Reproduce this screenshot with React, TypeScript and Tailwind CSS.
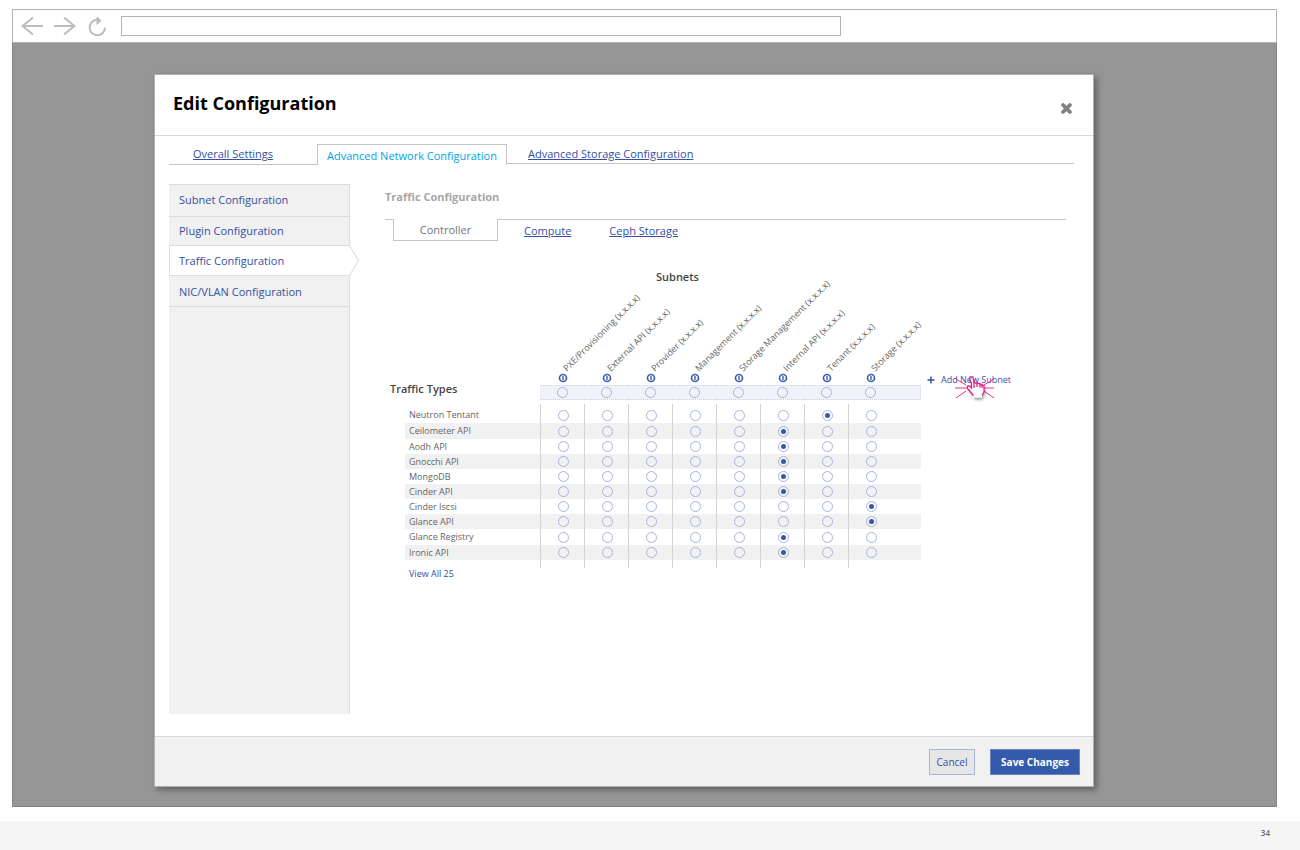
import React, { useState } from "react";

const subnets = [
  "PXE/Provisioning (x.x.x.x)",
  "External API (x.x.x.x)",
  "Provider (x.x.x.x)",
  "Management (x.x.x.x)",
  "Storage Management (x.x.x.x)",
  "Internal API (x.x.x.x)",
  "Tenant (x.x.x.x)",
  "Storage (x.x.x.x)",
];

type Traffic = { name: string; subnet: number; height: string };

const traffic: Traffic[] = [
  { name: "Neutron Tentant", subnet: 6, height: "h-[19px] *:pt-[3px]" },
  { name: "Ceilometer API", subnet: 5, height: "h-[16px]" },
  { name: "Aodh API", subnet: 5, height: "h-[15px]" },
  { name: "Gnocchi API", subnet: 5, height: "h-[15px]" },
  { name: "MongoDB", subnet: 5, height: "h-[15px]" },
  { name: "Cinder API", subnet: 5, height: "h-[15px]" },
  { name: "Cinder Iscsi", subnet: 7, height: "h-[15px]" },
  { name: "Glance API", subnet: 7, height: "h-[15px]" },
  { name: "Glance Registry", subnet: 5, height: "h-[16px]" },
  { name: "Ironic API", subnet: 5, height: "h-[15px]" },
];

function Radio(props: React.InputHTMLAttributes<HTMLInputElement>) {
  return (
    <input
      type="radio"
      {...props}
      className="ml-[17px] flex size-[11px] appearance-none items-center justify-center rounded-full border border-[#aab2dc] before:hidden before:size-[5px] before:rounded-full before:bg-[#345bab] checked:before:block"
    />
  );
}

function BrowserBar() {
  return (
    <div className="flex h-[34px] items-center border border-[#b3b3b3] bg-white pl-2">
      <button type="button" aria-label="Back">
        <svg width="22" height="20" viewBox="0 0 22 20" fill="none" stroke="#bcbcbc" strokeWidth="2">
          <path d="M22 10H1.5M12 1.5L1.5 10L12 18.5" />
        </svg>
      </button>
      <button type="button" aria-label="Forward" className="ml-[11px]">
        <svg width="22" height="20" viewBox="0 0 22 20" fill="none" stroke="#bcbcbc" strokeWidth="2">
          <path d="M0 10H20.5M10 1.5L20.5 10L10 18.5" />
        </svg>
      </button>
      <button type="button" aria-label="Reload" className="ml-[11px]">
        <svg width="20" height="20" viewBox="0 0 20 20" fill="none">
          <path d="M10.5 3.8A7.7 7.7 0 1 0 18 11.5" stroke="#bcbcbc" strokeWidth="2" />
          <path d="M10 1L14 4.5L10 8.5Z" fill="#bcbcbc" stroke="#bcbcbc" />
        </svg>
      </button>
      <input
        type="text"
        aria-label="Address"
        className="ml-[14px] h-5 w-[720px] border border-[#b3b3b3] bg-white px-2 text-[11px] outline-none"
      />
    </div>
  );
}

function Sidebar() {
  return (
    <nav
      aria-label="Network sections"
      className="min-h-[530px] w-[181px] shrink-0 border-t border-r border-[#dcdcdc] bg-[#f1f1f1] text-[11px] text-[#3450a4]"
    >
      <a href="#subnet" className="flex h-8 items-center border-b border-[#dcdcdc] pl-[10px]">
        Subnet Configuration
      </a>
      <a href="#plugin" className="flex h-[29px] items-center border-b border-[#dcdcdc] pl-[10px]">
        Plugin Configuration
      </a>
      <a
        href="#traffic"
        aria-current="page"
        className="relative flex h-[30px] items-center border-b border-l border-[#dcdcdc] bg-white pt-[2px] pl-[9px]"
      >
        Traffic Configuration
        <svg className="absolute -top-px left-full" width="11" height="31" viewBox="0 0 11 31" fill="none">
          <path d="M0 0.5H1L10 15.5L1 30.5H0Z" fill="#fff" />
          <path d="M0.5 0.5L9.5 15.5L0.5 30.5" stroke="#d6d6d6" />
        </svg>
      </a>
      <a href="#nic" className="flex h-[31px] items-center border-b border-[#dcdcdc] pt-[2px] pl-[10px]">
        NIC/VLAN Configuration
      </a>
    </nav>
  );
}

function ClickPointer() {
  return (
    <svg
      className="pointer-events-none absolute top-0 left-7"
      width="42"
      height="28"
      viewBox="0 0 42 28"
      fill="none"
      aria-hidden="true"
    >
      <defs>
        <filter id="hand-shadow" x="-30%" y="-30%" width="170%" height="170%">
          <feDropShadow dx="1" dy="2" stdDeviation="1.5" floodColor="#000" floodOpacity="0.45" />
        </filter>
      </defs>
      <path
        d="M1 5L11 11M0 14H12M1 24L11 17M39 5L29 11M39 14H29M39 24L29 17"
        stroke="#e8318f"
      />
      <path
        filter="url(#hand-shadow)"
        d="M15 3H18.5V9H21.5V9.5H24.5V10.5H27V11.5H29V18L27 21V23.5H18.5V21L15.5 18L12.5 14.5V12H14.5L16.5 14V8Z"
        fill="#fff"
      />
      <path
        d="M18.5 21.5L15.5 18L12.5 14.5V12H14.5L16.5 14V9L15 7V3H18L19 9V14M19 9H22V13M22.5 9.5H25V13.5M25 10.5H27V14M27.5 11.5H29V18L27 21"
        stroke="#e8248a"
        strokeWidth="1.3"
      />
    </svg>
  );
}

function TrafficTable() {
  const [choice, setChoice] = useState(traffic.map((t) => t.subnet));
  return (
    <table className="w-[531px] shrink-0 table-fixed border-separate border-spacing-0 text-left text-[9px] leading-3 text-[#666]">
      <colgroup>
        <col className="w-[15px]" />
        <col className="w-[135px]" />
        {subnets.slice(1).map((s) => (
          <col key={s} className="w-[44px]" />
        ))}
        <col className="w-[73px]" />
      </colgroup>
      <thead>
        <tr className="h-5">
          <td colSpan={2} />
          <th colSpan={8} scope="colgroup" className="pl-[116px] text-[11px] font-semibold text-[#454545]">
            Subnets
          </th>
        </tr>
        <tr className="h-[98px]">
          <td colSpan={2} />
          {subnets.map((s) => (
            <th key={s} scope="col" className="relative align-bottom font-normal">
              <span className="absolute bottom-[11px] left-[29px] origin-bottom-left -rotate-45 whitespace-nowrap">
                {s}
              </span>
              <button type="button" aria-label={`About ${s}`} className="ml-[18px] block pb-[2px]">
                <svg width="10" height="10" viewBox="0 0 10 10" fill="none" stroke="#3f5fb0">
                  <circle cx="5" cy="5" r="3.5" strokeWidth="1.7" />
                  <path d="M5 3V7" strokeWidth="1.4" />
                </svg>
              </button>
            </th>
          ))}
        </tr>
        <tr className="h-[15px]">
          <th colSpan={2} scope="row" className="relative text-[11px] font-semibold text-[#454545]">
            <span className="absolute bottom-[5px] left-0">Traffic Types</span>
          </th>
          {subnets.map((s, i) => (
            <td
              key={s}
              className="border-y border-dotted border-[#cfd5e2] bg-[#eff3f9] p-0 last:border-r"
            >
              <Radio name="all-traffic" aria-label={`All traffic on ${s}`} value={i} />
            </td>
          ))}
        </tr>
        <tr className="h-1">
          <td colSpan={10} className="p-0" />
        </tr>
      </thead>
      <tbody>
        {traffic.map((t, row) => (
          <tr key={t.name} className={t.height}>
            <td className="p-0" />
            <th
              scope="row"
              className={row % 2 ? "bg-[#f1f1f1] p-0 pl-1 font-normal" : "p-0 pl-1 font-normal"}
            >
              {t.name}
            </th>
            {subnets.map((s, i) => (
              <td
                key={s}
                className={
                  row % 2
                    ? "border-l border-[#d4d4d4] bg-[#f1f1f1] p-0"
                    : "border-l border-[#d4d4d4] p-0"
                }
              >
                <Radio
                  name={`traffic-${row}`}
                  aria-label={`${t.name} on ${s}`}
                  checked={choice[row] === i}
                  onChange={() => setChoice(choice.map((c, r) => (r === row ? i : c)))}
                />
              </td>
            ))}
          </tr>
        ))}
        <tr className="h-2">
          <td colSpan={2} className="p-0" />
          {subnets.map((s) => (
            <td key={s} className="border-l border-[#d4d4d4] p-0" />
          ))}
        </tr>
      </tbody>
    </table>
  );
}

function TrafficPanel() {
  return (
    <section className="min-w-0 flex-1 pt-[5px] pr-2 pl-[35px] text-[11px]">
      <h2 className="leading-4 font-bold text-[#a6a6a6]">Traffic Configuration</h2>
      <div className="mt-[14px] flex h-[22px] text-[#3450a4]">
        <span className="w-2 border-t border-[#c4c4c4]" />
        <a
          href="#controller"
          aria-current="page"
          className="flex w-[105px] items-center justify-center border-x border-b border-[#c4c4c4] pt-[2px] text-[#757575]"
        >
          Controller
        </a>
        <div className="flex flex-1 items-center gap-[38px] border-t border-[#c4c4c4] pt-px pl-[26px]">
          <a href="#compute" className="underline">
            Compute
          </a>
          <a href="#ceph" className="underline">
            Ceph Storage
          </a>
        </div>
      </div>
      <div className="mt-[26px] flex items-start pl-[5px]">
        <TrafficTable />
        <button
          type="button"
          className="relative mt-[107px] ml-[6px] flex items-center gap-[6px] text-[9px] leading-3 font-medium whitespace-nowrap text-[#3450a4]"
        >
          <svg width="8" height="8" viewBox="0 0 8 8" stroke="#3450a4" strokeWidth="1.5" aria-hidden="true">
            <path d="M4 0.5V7.5M0.5 4H7.5" />
          </svg>
          Add New Subnet
          <ClickPointer />
        </button>
      </div>
      <a href="#all" className="ml-6 block text-[9px] leading-3 font-medium text-[#3450a4]">
        View All 25
      </a>
    </section>
  );
}

function EditDialog() {
  return (
    <div
      role="dialog"
      aria-labelledby="dialog-title"
      className="flex flex-1 flex-col border border-[#b0b0b0] bg-white shadow-[3px_3px_6px_rgba(0,0,0,0.35)]"
    >
      <header className="flex h-[61px] items-center justify-between border-b border-[#d9d9d9] pr-5 pl-[18px]">
        <h1 id="dialog-title" className="pb-1 text-[18px] font-bold text-black">
          Edit Configuration
        </h1>
        <button type="button" aria-label="Close" className="pt-[6px]">
          <svg width="13" height="13" viewBox="0 0 13 13" stroke="#808080" strokeWidth="3.8" strokeLinecap="round">
            <path d="M3 3L10 10M10 3L3 10" />
          </svg>
        </button>
      </header>
      <div className="flex-1 pt-2 pr-[19px] pb-[22px] pl-[14px]">
        <nav aria-label="Settings" className="flex h-[21px] text-[11px] text-[#3450a4]">
          <div className="w-[148px] border-b border-[#c4c4c4] pl-6 leading-[19px]">
            <a href="#overall" className="underline">
              Overall Settings
            </a>
          </div>
          <a
            href="#network"
            aria-current="page"
            className="flex w-[190px] items-center justify-center border-x border-t border-[#c4c4c4] pt-[2px] text-[#00a5e5]"
          >
            Advanced Network Configuration
          </a>
          <div className="mb-px flex-1 border-b border-[#c4c4c4] pl-[21px] leading-[19px]">
            <a href="#storage" className="underline">
              Advanced Storage Configuration
            </a>
          </div>
        </nav>
        <div className="mt-[19px] flex">
          <Sidebar />
          <TrafficPanel />
        </div>
      </div>
      <footer className="flex h-[50px] items-center justify-end gap-[15px] border-t border-[#d9d9d9] bg-[#f1f1f1] pr-[13px] text-[10px]">
        <button
          type="button"
          className="h-[26px] w-[46px] border border-[#aab4d8] bg-[#e6e6e6] pt-px text-[#3450a4]"
        >
          Cancel
        </button>
        <button
          type="button"
          className="h-[26px] w-[90px] border border-[#6f82c0] bg-[#345bab] pt-px font-bold text-white"
        >
          Save Changes
        </button>
      </footer>
    </div>
  );
}

export default function App() {
  return (
    <div className="flex min-h-screen flex-col bg-white font-['Open_Sans',sans-serif]">
      <main className="mt-[9px] mr-[23px] ml-3 flex flex-1 flex-col">
        <BrowserBar />
        <div className="flex flex-1 border-x border-b border-[#828282] bg-[#969696] pt-[31px] pr-[182px] pb-[19px] pl-[141px]">
          <EditDialog />
        </div>
      </main>
      <footer className="mt-[14px] flex h-[29px] items-center justify-end bg-[#f5f5f5] pr-[30px] pb-[5px] text-[8px] font-semibold text-[#6b6b6b]">
        34
      </footer>
    </div>
  );
}
